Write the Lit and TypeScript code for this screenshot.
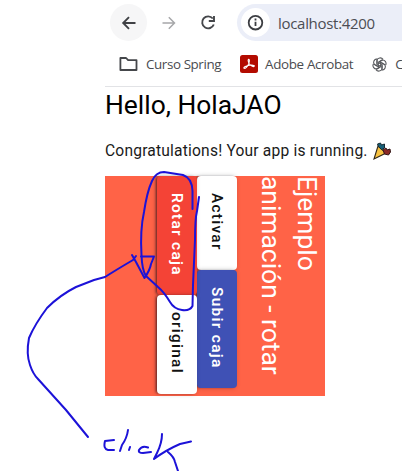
import { LitElement, html, css, svg } from "lit";
import { customElement } from "lit/decorators.js";

@customElement("browser-bar")
class BrowserBar extends LitElement {
  static styles = css`
    :host { display: block; height: 87px; margin-left: 105px; box-sizing: border-box; border-bottom: 1px solid #e2e3e6; color: #4a4c50; font-family: "Open Sans", "Noto Sans", sans-serif; overflow: hidden; }
    .nav { display: flex; align-items: center; height: 37px; margin-top: 4px; padding-left: 5px; }
    .back { display: flex; flex: none; width: 37px; height: 37px; border-radius: 50%; background: #f6f6f7; }
    .nav svg { flex: none; }
    .forward { margin-left: 3px; }
    .reload { margin-left: 2px; }
    .address { display: flex; align-items: center; flex: 1; height: 37px; margin-left: 11px; padding-left: 4px; border-radius: 19px 0 0 19px; background: #ebeef8; }
    .info { display: flex; flex: none; width: 29px; height: 29px; border-radius: 50%; background: #fff; }
    .url { margin-left: 8px; font-size: 15px; letter-spacing: -0.3px; color: #4b4d53; white-space: nowrap; }
    .marks { display: flex; align-items: center; height: 40px; margin-top: 3px; padding-left: 14px; font-size: 13.4px; white-space: nowrap; }
    .marks svg { flex: none; }
    .spring { width: 76px; margin-left: 7px; letter-spacing: -0.4px; }
    .acrobat { margin-left: 19px; }
    .adobe { width: 90px; margin-left: 7px; letter-spacing: -0.35px; }
    .knot { margin-left: 19px; }
    .last { margin-left: 8px; }
  `;
  render() {
    return html`
      <div class="nav">
        <div class="back"><svg width="37" height="37" fill="none" stroke="#3f4145" stroke-width="1.9"><path d="M25.500 19H13.300M19 13.200 13.200 19l5.800 5.800"/></svg></div>
        <svg class="forward" width="37" height="37" fill="none" stroke="#a6a7a9" stroke-width="1.5"><path d="M12.500 19h12M18.800 13.200 24.500 19l-5.700 5.800"/></svg>
        <svg class="reload" width="37" height="37" fill="none" stroke="#45474b" stroke-width="1.9"><path d="M23.800 14.500A6 6 0 1 0 24.800 20.500M25 12v5h-5.200"/></svg>
        <div class="address">
          <div class="info"><svg width="29" height="29" fill="none" stroke="#3c3e42" stroke-width="1.8"><circle cx="14.500" cy="14.700" r="6.800"/><path d="M14.500 13.700v4.400M14.500 10.600v1.800"/></svg></div>
          <span class="url">localhost:4200</span>
        </div>
      </div>
      <div class="marks">
        <svg width="20" height="16" fill="none" stroke="#45474b" stroke-width="1.8" stroke-linejoin="round"><path d="M1.400 2h5.700l2 2.100h8.400V14H1.400z"/></svg>
        <span class="spring">Curso Spring</span>
        <svg class="acrobat" width="18" height="18"><rect width="18" height="18" rx="2.500" fill="#b30b00"/><path d="M4.100 13.200c-1.200-.8 2.600-2.500 5.600-3 2.200-.3 5-.1 4.500 1-.6 1.100-3.800-.6-5-2.500-1-1.600-1.500-4.200-.5-4.300 1.200 0 .6 3.100-.3 5.100-1.100 2.500-3.400 4.500-4.300 3.700z" fill="none" stroke="#fff" stroke-width="1.1"/></svg>
        <span class="adobe">Adobe Acrobat</span>
        <svg class="knot" width="15" height="15" viewBox="-7.5 -7.5 15 15" fill="none" stroke="#55575b" stroke-width="1.1">
          ${[0, 60, 120, 180, 240, 300].map(a => svg`<path transform="rotate(${a})" d="M-2.600-4.300C-1.800-7 2-7.400 3.500-5.100M-2.600-4.300v4.200L0 1.500M-.5-2.500 3.100-4.600"/>`)}
        </svg>
        <span class="last">C</span>
      </div>`;
  }
}

@customElement("rotated-card")
class RotatedCard extends LitElement {
  static styles = css`
    :host { display: block; width: 220px; height: 220px; background: #ff6347; transform: rotate(90deg); font-family: Roboto, sans-serif; }
    .title { margin: 0; padding-bottom: 16px; height: 72px; font-size: 26.4px; line-height: 36px; font-weight: 400; color: #fff; white-space: nowrap; }
    .row { display: flex; height: 40px; }
    button { box-sizing: border-box; flex: none; height: 40px; padding: 0 0 0 17px; text-align: left; border: 0; border-radius: 4px; background: #fff; color: #111; font: 500 15.4px/38px Roboto, sans-serif; letter-spacing: 1.3px; white-space: nowrap; box-shadow: 0 3px 1px -2px #0003, 0 2px 2px #0024, 0 1px 5px #0003; }
    .activate { width: 94px; }
    .raise { width: 118px; background: #3f51b5; color: #fff; font-weight: 600; }
    .rotate { width: 119px; background: #f44336; color: #fff; font-weight: 600; }
    .original { width: 99px; }
  `;
  render() {
    return html`
      <h2 class="title">Ejemplo<br>animación - rotar</h2>
      <div class="row"><button class="activate">Activar</button><button class="raise">Subir caja</button></div>
      <div class="row"><button class="rotate">Rotar caja</button><button class="original">original</button></div>`;
  }
}

@customElement("app-root")
class AppRoot extends LitElement {
  static styles = css`
    :host { display: block; position: relative; width: 402px; height: 471px; overflow: hidden; background: #fff; }
    .page { margin-left: 105px; font-family: Roboto, sans-serif; color: #1a1a1a; }
    h1 { margin: 0; padding-top: 1px; font-size: 26.4px; line-height: 34px; font-weight: 400; white-space: nowrap; color: #000; }
    .message { display: flex; align-items: center; height: 20px; margin: 19px 0 15px; font-size: 15.6px; letter-spacing: 0.19px; white-space: nowrap; }
    .message svg { margin-left: 4px; }
    .ink { position: absolute; inset: 0; }
  `;
  render() {
    return html`
      <browser-bar></browser-bar>
      <main class="page">
        <h1>Hello, HolaJAO</h1>
        <div class="message"><span>Congratulations! Your app is running.</span>
          <svg width="20" height="20" viewBox="0 0 20 20"><path d="m6 5 8 7-12 6z" fill="#f8c342" stroke="#302719" stroke-width="1.1"/><path d="m5.500 3 3-1 1 2 3-1v4l-3 1.500-3-3z" fill="#176078" stroke="#162b34"/><path d="m11 9 3-2 1 2 3-1 .5 3-2 3-4-1z" fill="#8b2825" stroke="#351717"/></svg>
        </div>
        <rotated-card></rotated-card>
      </main>
      <svg class="ink" width="402" height="471" fill="none" stroke="#1c12d8" stroke-width="2" stroke-linecap="round" stroke-linejoin="round">
        <path d="M192.500 209V191Q192 178 183 175L164 172Q156 172 152 181Q147 192 144 212Q140 230 141.500 255Q142 270 146 276L158 287Q164 292 170 302Q174 309 182 310Q190 311 192.500 306L193 285Q194 262 195 240Q195 219 197 211L199 197"/>
        <path d="M132 255 136 262 144.500 278Q150 270 151 264L154 256.500H141M136 256 133 260Q116 270 105 277L94 280 76 287Q60 295 47 308Q35 324 29 338Q26 354 30 365Q33 374 38 379L66 410 88 437"/>
        <path d="M114 440 105 441Q103 449 108 450L114 450M128 430Q127 438 122 445L120 451M129 450 130 447M148 447.500Q142 445 139 450Q138 453 143 453L151 452M162 434Q162 443 157 453L154 459Q166 450 180 444L191 441.500M168 452Q174 457 175 462L178 471"/>
      </svg>`;
  }
}
